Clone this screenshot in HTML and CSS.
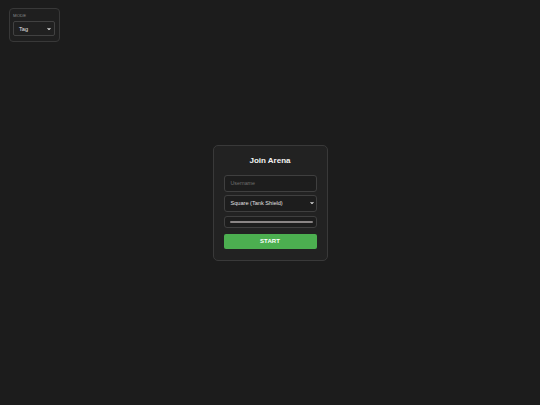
FILE: index.html
```html
<!DOCTYPE html>
<html>
<head>
<meta charset="utf-8">
<link rel="stylesheet" href="styles.css">
</head>
<body>
<div class="mode-panel">
  <div class="mode-label">MODE</div>
  <div class="select-wrap mode-select">
    <span class="select-text">Tag</span>
    <svg class="chev" viewBox="0 0 10 7" width="4" height="3"><path d="M1.5 1.5 L5 5 L8.5 1.5" fill="none" stroke="#e6e6e6" stroke-width="2.6"/></svg>
  </div>
</div>
<main class="stage">
  <div class="card">
    <h1 class="title">Join Arena</h1>
    <div class="field input"><span class="placeholder">Username</span></div>
    <div class="field select-wrap shape-select">
      <span class="select-text">Square (Tank Shield)</span>
      <svg class="chev" viewBox="0 0 10 7" width="4" height="3"><path d="M1.5 1.5 L5 5 L8.5 1.5" fill="none" stroke="#e6e6e6" stroke-width="2.6"/></svg>
    </div>
    <div class="field range"><div class="track"></div></div>
    <button class="start">START</button>
  </div>
</main>
</body>
</html>
```
FILE: styles.css
```css
* { box-sizing: border-box; }
html, body { margin: 0; padding: 0; }
body {
  background: #1c1c1c;
  font-family: "Liberation Sans", Arial, sans-serif;
  color: #e6e6e6;
  min-height: 100vh;
}
.mode-panel {
  position: absolute;
  left: 9px;
  top: 8px;
  width: 51px;
  height: 34px;
  border: 1px solid #383838;
  border-radius: 4px;
  background: #1f1f1f;
  padding: 4px 4px 0 3px;
}
.mode-label {
  font-size: 4.3px;
  line-height: 6px;
  color: #8a8a8a;
  letter-spacing: 0.1px;
}
.select-wrap {
  position: relative;
  display: flex;
  align-items: center;
  background: #202020;
  border: 1px solid #414141;
  border-radius: 2px;
}
.mode-select {
  margin-top: 2px;
  width: 42px;
  height: 15px;
  padding-left: 5px;
}
.mode-select .select-text { font-size: 5.6px; color: #e0e0e0; }
.chev {
  position: absolute;
  right: 3px;
  top: 50%;
  transform: translateY(-50%);
}
.stage {
  min-height: 100vh;
  display: flex;
  align-items: center;
  justify-content: center;
}
.card {
  width: 115px;
  background: #222222;
  border: 1px solid #393939;
  border-radius: 5px;
  padding: 10px 10px 11px;
  display: flex;
  flex-direction: column;
}
.title {
  margin: 0 0 9px;
  font-size: 8px;
  line-height: 10px;
  font-weight: bold;
  text-align: center;
  color: #f2f2f2;
}
.field {
  width: 100%;
  border: 1px solid #3f3f3f;
  border-radius: 3px;
  background: #1d1d1d;
}
.input {
  height: 17px;
  display: flex;
  align-items: center;
  padding-left: 6px;
}
.placeholder { font-size: 5.3px; color: #6f6f6f; }
.shape-select {
  margin-top: 3px;
  height: 17px;
  padding-left: 6px;
}
.shape-select .select-text { font-size: 5.6px; color: #e0e0e0; }
.shape-select .chev { right: 2px; }
.range {
  margin-top: 4px;
  height: 12px;
  display: flex;
  align-items: center;
  padding: 0 3px 0 5px;
}
.track {
  width: 100%;
  height: 2px;
  border-radius: 1px;
  background: #8a8585;
}
.start {
  margin-top: 6px;
  height: 15px;
  border: none;
  border-radius: 2px;
  background: #4caf50;
  color: #ffffff;
  font-family: "Liberation Sans", Arial, sans-serif;
  font-weight: bold;
  font-size: 6px;
  padding: 0;
  letter-spacing: 0.1px;
}
```
